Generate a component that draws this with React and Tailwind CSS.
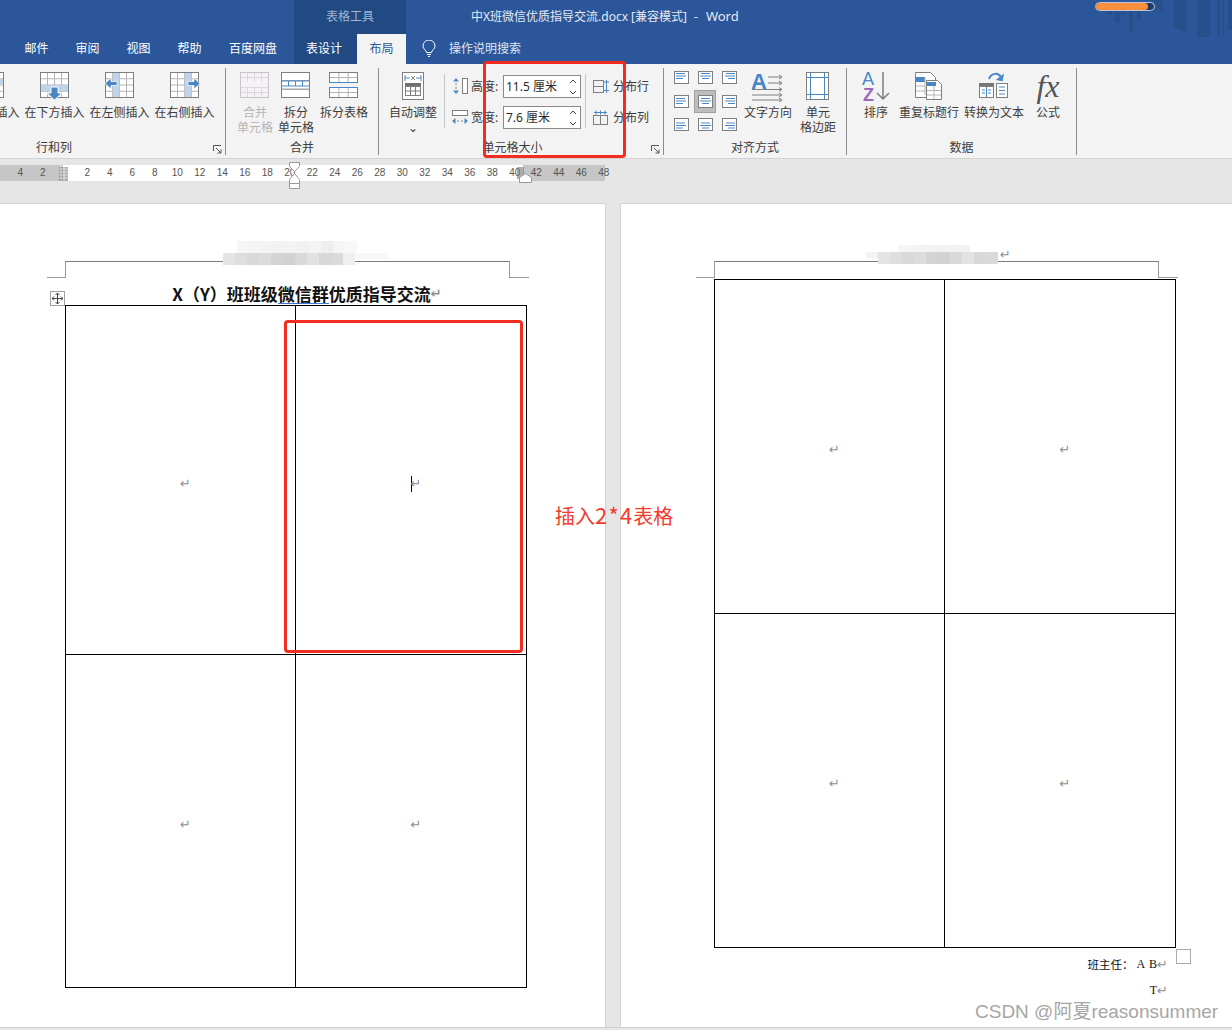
const BLUE = '#4a86c5';
const GRAY = '#7f7f7f';

function Grid({ x, y, w, h, cols, rows, stroke = GRAY, fill = '#fff', inner = '#b5b5b5' }) {
  const lines = [];
  for (let i = 1; i < cols; i++) {
    const px = x + (w * i) / cols;
    lines.push(<line key={'c' + i} x1={px} x2={px} y1={y} y2={y + h} stroke={inner} />);
  }
  for (let i = 1; i < rows; i++) {
    const py = y + (h * i) / rows;
    lines.push(<line key={'r' + i} x1={x} x2={x + w} y1={py} y2={py} stroke={inner} />);
  }
  return (
    <g>
      <rect x={x} y={y} width={w} height={h} fill={fill} />
      {lines}
      <rect x={x} y={y} width={w} height={h} fill="none" stroke={stroke} />
    </g>
  );
}

const InsertBelow = () => (
  <svg width="30" height="30" viewBox="0 0 30 30">
    <Grid x={0.5} y={1.5} w={28} h={25} cols={4} rows={4} />
    <rect x={1} y={14} width={27} height={6} fill="#c0d3e8" />
    <path d="M11 16h7v6h4l-7.500 7-7.500-7h4z" fill={BLUE} stroke="#fff" />
  </svg>
);
const InsertAbove = () => (
  <svg width="30" height="30" viewBox="0 0 30 30">
    <Grid x={0.5} y={1.5} w={28} h={25} cols={4} rows={4} />
    <rect x={1} y={8} width={27} height={6} fill="#c0d3e8" />
  </svg>
);
const InsertLeft = () => (
  <svg width="30" height="30" viewBox="0 0 30 30">
    <Grid x={0.5} y={1.5} w={28} h={25} cols={4} rows={4} />
    <rect x={7.500} y={2} width={7} height={24} fill="#c0d3e8" />
    <path d="M0 12.500l6-5.500v3.500h6v4H6V18z" fill={BLUE} stroke="#fff" strokeWidth="0.7" />
  </svg>
);
const InsertRight = () => (
  <svg width="30" height="30" viewBox="0 0 30 30">
    <Grid x={0.5} y={1.5} w={28} h={25} cols={4} rows={4} />
    <rect x={14.500} y={2} width={7} height={24} fill="#c0d3e8" />
    <path d="M30 12.500L24 7v3.500h-6v4h6V18z" fill={BLUE} stroke="#fff" strokeWidth="0.7" />
  </svg>
);
const MergeCells = () => (
  <svg width="30" height="30" viewBox="0 0 30 30">
    <Grid x={0.5} y={1.5} w={28} h={25} cols={4} rows={5} stroke="#c8c4c8" fill="#f7f1f7" inner="#dcd7dc" />
    <rect x={1} y={11} width={27} height={5} fill="#f7f1f7" />
  </svg>
);
const SplitCells = () => (
  <svg width="30" height="30" viewBox="0 0 30 30">
    <Grid x={0.5} y={1.5} w={28} h={25} cols={1} rows={3} inner={GRAY} />
    <rect x={0.5} y={10} width={28} height={5} fill="#fff" stroke={BLUE} />
    <path d="M7.500 10v5M14.500 10v5M21.500 10v5" stroke={BLUE} />
  </svg>
);
const SplitTable = () => (
  <svg width="30" height="30" viewBox="0 0 30 30">
    <Grid x={0.5} y={1.5} w={28} h={10} cols={3} rows={2} />
    <path d="M0.500 11.500h28" stroke={BLUE} />
    <Grid x={0.5} y={16.5} w={28} h={10} cols={3} rows={2} />
    <path d="M0.500 16.500h28" stroke={BLUE} />
  </svg>
);
const AutoFit = () => (
  <svg width="24" height="30" viewBox="0 0 24 30">
    <rect x={1.5} y={1.5} width={21} height={27} fill="#fff" stroke={GRAY} />
    <path d="M4 4v6M20 4v6M4 7h5M15 7h5" stroke={BLUE} />
    <path d="M10 5l4 4M14 5l-4 4" stroke={GRAY} />
    <rect x={4} y={12} width={16} height={3} fill="#6f6f6f" />
    <Grid x={4.5} y={15.5} w={15} h={9} cols={3} rows={2} inner={GRAY} />
  </svg>
);
const RowHeight = () => (
  <svg width="17" height="17" viewBox="0 0 17 17">
    <rect x={10.500} y={0.5} width={5} height={15} fill="#fff" stroke={GRAY} />
    <path d="M4 1v14" stroke={GRAY} strokeDasharray="2 2" />
    <path d="M4 0l3 3.500H1zM4 16l3-3.500H1z" fill={BLUE} />
  </svg>
);
const ColWidth = () => (
  <svg width="17" height="17" viewBox="0 0 17 17">
    <rect x={0.5} y={1.5} width={15} height={5} fill="#fff" stroke={GRAY} />
    <path d="M1 12h14" stroke={GRAY} strokeDasharray="2 2" />
    <path d="M0 12l3.500-3v6zM16 12l-3.500-3v6z" fill={BLUE} />
  </svg>
);
const DistRows = () => (
  <svg width="16" height="16" viewBox="0 0 16 16">
    <rect x={0.5} y={1.5} width={10} height={12} fill="none" stroke={GRAY} />
    <path d="M0.500 7.500h10" stroke={GRAY} />
    <path d="M13.500 1v13M11 3h5M11 11.500h5" stroke={BLUE} />
  </svg>
);
const DistCols = () => (
  <svg width="16" height="16" viewBox="0 0 16 16">
    <rect x={0.5} y={5.5} width={14} height={9} fill="none" stroke={GRAY} />
    <path d="M7.500 5.500v9" stroke={GRAY} />
    <path d="M1 2.500h13M3 0.500v4M12 0.500v4M7.500 0.500v4" stroke={BLUE} />
  </svg>
);
const TextDir = () => (
  <svg width="34" height="32" viewBox="0 0 34 32">
    <text x="0" y="19" fontSize="22" fontWeight="700" fill={BLUE} fontFamily="Liberation Sans, sans-serif">A</text>
    <path d="M17 7h13M17 13h13M1 19.500h29M1 25h29M1 30h29" stroke={GRAY} />
    <path d="M28 5l3 2-3 2M28 11l3 2-3 2M28 17.500l3 2-3 2M28 23l3 2-3 2M28 28l3 2-3 2" fill="none" stroke={GRAY} />
  </svg>
);
const Margins = () => (
  <svg width="24" height="30" viewBox="0 0 24 30">
    <rect x={0.5} y={1.5} width={22} height={27} fill="#fff" stroke={GRAY} />
    <path d="M4.500 1.500v27M18.500 1.500v27M0.500 6.500h22M0.500 23.500h22" stroke={BLUE} />
  </svg>
);
const Sort = () => (
  <svg width="28" height="32" viewBox="0 0 28 32">
    <text x="0" y="15" fontSize="18" fill={BLUE} fontFamily="Liberation Sans, sans-serif">A</text>
    <text x="1" y="31" fontSize="18" fontWeight="700" fill="#9b69b5" fontFamily="Liberation Sans, sans-serif">Z</text>
    <path d="M21 2v27M15 23l6 6 6-6" fill="none" stroke={GRAY} strokeWidth="1.500" />
  </svg>
);
const RepeatHeader = () => (
  <svg width="30" height="30" viewBox="0 0 30 30">
    <path d="M1.500 1.500h15l5 5v20h-20z" fill="#fff" stroke={GRAY} />
    <rect x={2} y={6} width={9} height={5} fill={BLUE} />
    <path d="M2 15h9M2 20h9M11 6v18" stroke="#b5b5b5" />
    <path d="M12.500 9.500h11l4 4v15h-15z" fill="#fff" stroke={GRAY} />
    <rect x={13} y={11} width={9} height={4} fill={BLUE} />
    <path d="M13 19.500h14M13 24h14M20 15v13" stroke="#b5b5b5" />
  </svg>
);
const ToText = () => (
  <svg width="30" height="30" viewBox="0 0 30 30">
    <path d="M10 8c2-6 9-7 12-2" fill="none" stroke={BLUE} strokeWidth="2" />
    <path d="M24 2v8h-7z" fill={BLUE} transform="rotate(10 22 8)" />
    <rect x={0} y={12} width={15} height={4} fill="#777" />
    <rect x={0.5} y={15.5} width={14} height={11} fill="#fff" stroke={GRAY} />
    <path d="M7.500 16v10M3 19h3M9 19h3M3 22h3M9 22h3" stroke={BLUE} />
    <rect x={17.500} y={12.500} width={11} height={14} fill="#fff" stroke={GRAY} />
    <path d="M20 16h6M20 19.500h6M20 23h6" stroke={BLUE} />
  </svg>
);
const Launcher = () => (
  <svg width="9" height="9" viewBox="0 0 9 9">
    <path d="M0.500 6V0.500H8M3 3l5 5M8 4.500V8H4.500" fill="none" stroke="#555" />
  </svg>
);
const Chevrons = () => (
  <svg width="8" height="18" viewBox="0 0 8 18">
    <path d="M1 5l3-3 3 3M1 13l3 3 3-3" fill="none" stroke="#444" />
  </svg>
);
const Bulb = () => (
  <svg width="14" height="18" viewBox="0 0 14 18">
    <path d="M4.500 12.500C4 10 1 9 1 6a6 6 0 0 1 12 0c0 3-3 4-3.500 6.500z" fill="none" stroke="#fff" />
    <path d="M5 14.500h4M6 16.500h2" stroke="#fff" />
  </svg>
);

function Tool({ w, icon, lines, faded }) {
  return (
    <div className={`flex shrink-0 flex-col items-center text-center ${faded ? 'text-[#b5b5b5]' : ''}`} style={{ width: w }}>
      <div className="flex h-[32px] items-center justify-center">{icon}</div>
      <div className="mt-[3px] whitespace-nowrap leading-[15px]">
        {lines.map((l) => (
          <div key={l}>{l}</div>
        ))}
      </div>
    </div>
  );
}

function Group({ w, label, labelClass = 'text-center', launcher, children }) {
  return (
    <div className="relative flex h-[87px] shrink-0 flex-col justify-between border-r border-[#8c8c8c]" style={{ width: w }}>
      <div className="flex items-start pt-[2px]">{children}</div>
      <div className={`leading-[15px] ${labelClass}`}>{label}</div>
      {launcher && (
        <div className="absolute bottom-[1px] right-[3px] flex">
          <Launcher />
        </div>
      )}
    </div>
  );
}

function SizeRow({ icon, label, value }) {
  return (
    <div className="flex h-[23px] items-center">
      <div className="flex w-[19px]">{icon}</div>
      <span className="w-[32px] leading-[15px]">{label}</span>
      <div className="flex h-[23px] w-[78px] items-center justify-between border border-[#8a8a8a] bg-white pl-[2px] pr-[3px]">
        <span className="whitespace-nowrap text-[#2a2a2a]">{value}</span>
        <Chevrons />
      </div>
    </div>
  );
}

const alignLines = {
  l: [[2, 10], [2, 11], [2, 8]],
  c: [[3, 11], [2, 12], [4, 10]],
  r: [[4, 12], [3, 12], [6, 12]],
};

function AlignCell({ h, v, active }) {
  const top = v === 0 ? 2.5 : v === 1 ? 3.5 : 5;
  return (
    <div className={`flex h-[23px] w-[22px] items-center justify-center justify-self-center ${active ? 'border border-[#a0a0a0] bg-[#bdbdbd]' : ''}`}>
      <svg width="15" height="13" viewBox="0 0 15 13">
        <rect x={0.5} y={0.5} width={14} height={12} fill="#fff" stroke={GRAY} />
        {alignLines[h].map(([a, b], i) => (
          <line key={i} x1={a} x2={b + 1} y1={top + i * 2.5} y2={top + i * 2.5} stroke={BLUE} />
        ))}
      </svg>
    </div>
  );
}

function Ribbon() {
  return (
    <div className="flex h-[95px] border-b border-[#d2d2d2] bg-[#f3f3f3] pt-[4px] text-[12px] text-[#3c3c3c]">
      <Group w={226} label="行和列" labelClass="w-[108px] text-center" launcher>
        <div className="ml-[-43px] flex">
          <Tool w={65} icon={<InsertAbove />} lines={['在上方插入']} />
          <Tool w={65} icon={<InsertBelow />} lines={['在下方插入']} />
          <Tool w={65} icon={<InsertLeft />} lines={['在左侧插入']} />
          <Tool w={65} icon={<InsertRight />} lines={['在右侧插入']} />
        </div>
      </Group>
      <Group w={153} label="合并">
        <div className="ml-[8px] flex">
          <Tool w={42} faded icon={<MergeCells />} lines={['合并', '单元格']} />
          <Tool w={40} icon={<SplitCells />} lines={['拆分', '单元格']} />
          <Tool w={56} icon={<SplitTable />} lines={['拆分表格']} />
        </div>
      </Group>
      <Group w={285} label="单元格大小" labelClass="pr-[17px] text-center" launcher>
        <div className="ml-[7px] flex">
          <Tool w={54} icon={<AutoFit />} lines={['自动调整', '⌄']} />
          <div className="ml-[4px] mt-[4px] h-[54px] w-px bg-[#c6c6c6]" />
          <div className="ml-[7px] mt-[5px] flex flex-col gap-[8px]">
            <SizeRow icon={<RowHeight />} label="高度:" value="11.5 厘米" />
            <SizeRow icon={<ColWidth />} label="宽度:" value="7.6 厘米" />
          </div>
          <div className="ml-[4px] mt-[4px] h-[54px] w-px bg-[#c6c6c6]" />
          <div className="ml-[7px] mt-[5px] flex flex-col gap-[8px]">
            <div className="flex h-[23px] items-center gap-[4px]">
              <DistRows />
              <span>分布行</span>
            </div>
            <div className="flex h-[23px] items-center gap-[4px]">
              <DistCols />
              <span>分布列</span>
            </div>
          </div>
        </div>
      </Group>
      <Group w={183} label="对齐方式">
        <div className="ml-[6px] flex">
          <div className="mt-[-4px] grid w-[71px] grid-cols-3 gap-y-[0.5px]">
            {[0, 1, 2].map((v) =>
              ['l', 'c', 'r'].map((h) => <AlignCell key={v + h} h={h} v={v} active={v === 1 && h === 'c'} />)
            )}
          </div>
          <Tool w={54} icon={<TextDir />} lines={['文字方向']} />
          <div className="w-[3px]" />
          <Tool w={40} icon={<Margins />} lines={['单元', '格边距']} />
        </div>
      </Group>
      <Group w={230} label="数据">
        <div className="ml-[9px] flex">
          <Tool w={40} icon={<Sort />} lines={['排序']} />
          <Tool w={66} icon={<RepeatHeader />} lines={['重复标题行']} />
          <Tool w={64} icon={<ToText />} lines={['转换为文本']} />
          <Tool
            w={44}
            icon={<span className="font-['Liberation_Serif',serif] text-[32px] italic leading-[32px] text-[#555]">fx</span>}
            lines={['公式']}
          />
        </div>
      </Group>
    </div>
  );
}

function TitleBar() {
  return (
    <div className="relative bg-[#2b579a] text-white">
      <div className="flex h-[34px]">
        <div className="w-[294px]" />
        <div className="flex w-[112px] items-center justify-center bg-[#224a82] text-[12px] text-[#9fb4d3]">表格工具</div>
        <div className="ml-[65px] flex items-center whitespace-pre text-[12px] text-[#e4eaf3]">
          <span>中X班微信优质指导交流.docx [兼容模式]</span>
          <span className="ml-[7px]">-</span>
          <span className="ml-[8px] text-[13px]">Word</span>
        </div>
      </div>
      <div className="flex h-[30px] items-center text-[12px]">
        <div className="w-[11px]" />
        {[['邮件', 51], ['审阅', 51], ['视图', 51], ['帮助', 51], ['百度网盘', 76]].map(([t, w]) => (
          <div key={t} className="flex h-full items-center justify-center" style={{ width: w }}>
            {t}
          </div>
        ))}
        <div className="ml-[3px] flex h-full w-[112px]">
          <div className="flex w-[63px] items-center justify-center bg-[#224a82] pr-[3px]">表设计</div>
          <div className="flex w-[49px] items-center justify-center bg-[#f3f3f3] text-[#2b579a]">布局</div>
        </div>
        <div className="ml-[16px] flex items-center gap-[13px] text-[#dfe6f1]">
          <Bulb />
          <span>操作说明搜索</span>
        </div>
      </div>
      <svg className="absolute right-0 top-0" width="137" height="40" viewBox="0 0 137 40">
        <g fill="#264f8c">
          <path d="M13 2h4v13h-4zM20 2h5v21h-5zM26 2h4v13h-4zM34 2h4v30h-4zM42 2h4v18h-4z" />
          <path d="M57 0h11v14zM79 0h13v33l-13-6zM102 0h13v37h-13zM122 0h3v36h-3zM127 0h2v34h-2zM133 0h4v30h-4z" />
        </g>
        <rect x="0.500" y="2.500" width="59" height="8" rx="4" fill="#1f3a66" stroke="#b9c7dc" />
        <rect x="1" y="3" width="52" height="7" rx="3.500" fill="#f98f3c" />
      </svg>
    </div>
  );
}

const rulerCell = 'w-[22.5px] shrink-0 text-center';

function Ruler() {
  const mid = [];
  for (let i = 2; i <= 40; i += 2) mid.push(i);
  return (
    <div className="relative h-[44px] bg-[#e6e6e6] pt-[6px]">
      <div className="flex h-[16px] font-['Liberation_Sans',sans-serif] text-[10px] leading-[16px] text-[#555]">
        <div className="flex w-[63px] shrink-0 bg-[#c6c6c6] pl-[9px]">
          <div className={rulerCell}>4</div>
          <div className={rulerCell}>2</div>
        </div>
        <div className="flex w-[460px] shrink-0 bg-white pl-[13px]">
          {mid.map((n) => (
            <div key={n} className={rulerCell}>
              {n}
            </div>
          ))}
        </div>
        <div className="flex w-[82px] shrink-0 bg-[#c6c6c6] pl-[2px]">
          {[42, 44, 46, 48].map((n) => (
            <div key={n} className={rulerCell}>
              {n}
            </div>
          ))}
        </div>
      </div>
      <svg className="absolute left-0 top-0" width="606" height="44" viewBox="0 0 606 44">
        <rect x="59" y="8" width="9" height="14" fill="#777" opacity="0.6" />
        <path d="M59 10h9M59 13h9M59 16h9M59 19h9M61 6v16M64 6v16" stroke="#fff" strokeWidth="0.6" />
        <rect x="517" y="8" width="7" height="12" fill="#777" opacity="0.6" />
        <path d="M289.500 3.500h10v4l-5 5-5-5zM289.500 20.500l5-6 5 6v4h-10zM289.500 24.500h10v5h-10z" fill="#fff" stroke="#999" />
        <path d="M519.500 23.500v-5l6-4 6 4v5z" fill="#fff" stroke="#999" />
      </svg>
    </div>
  );
}

function Mosaic({ cells, h, lead, trail }) {
  return (
    <div className="flex items-start">
      {lead && <div className="h-[6px] shrink-0" style={{ width: lead, background: '#f3f3f3' }} />}
      {cells.map((c, i) => (
        <div key={i} className="w-[12px] shrink-0" style={{ background: c, height: h }} />
      ))}
      {trail && <div className="h-[6px] shrink-0" style={{ width: trail, background: '#f8f8f8' }} />}
    </div>
  );
}

function HeaderFrame() {
  return (
    <div className="flex h-[17px] w-[482px]">
      <div className="w-[18px] border-b border-[#9a9a9a]" />
      <div className="w-[445px] border-x border-t border-x-[#9a9a9a] border-t-[#7a7a7a]" />
      <div className="flex-1 border-b border-[#9a9a9a]" />
    </div>
  );
}

function Mark({ className = '' }) {
  return <span className={`font-['DejaVu_Sans',sans-serif] text-[13px] leading-[12px] text-[#8f8f8f] ${className}`}>↵</span>;
}

function Cell({ className = '', children }) {
  return <div className={`flex items-center justify-center border-b border-r border-black pl-[10px] pt-[7px] ${className}`}>{children || <Mark />}</div>;
}

function Title() {
  return (
    <div className="flex h-[27px] w-[482px] items-center justify-center pl-[38px] pt-[4px] font-['Noto_Sans_CJK_SC',sans-serif] text-[17px] font-bold leading-[20px] text-[#111]">
      <span className="whitespace-nowrap">
        X（Y）班班级<span className="inline-block border-b border-[#3c78d8] leading-[18px]">微信群</span>优质指导交流
      </span>
      <Mark />
    </div>
  );
}

function App() {
  const light = ['#f6f6f6', '#f4f4f4', '#f3f3f3', '#f2f2f2', '#f3f3f3', '#f1f1f1', '#f4f4f4', '#eee', '#f5f5f5', '#f8f8f8'];
  const dark = ['#e4e4e4', '#dedede', '#d9d9d9', '#dcdcdc', '#d4d4d4', '#d2d2d2', '#d9d9d9', '#e2e2e2', '#d8d8d8', '#dadada', '#efefef'];
  return (
    <div className="relative h-[1030px] w-[1232px] overflow-hidden bg-[#e6e6e6] font-['Noto_Sans','Noto_Sans_CJK_SC',sans-serif]">
      <TitleBar />
      <Ribbon />
      <Ruler />

      <div className="flex h-[825px] gap-[14px] border-b border-[#d0d0d0]">
        <div className="relative w-[606px] border-r border-t border-[#d4d4d4] bg-white pl-[47px] pt-[57px]">
          <HeaderFrame />
          <Title />
          <div className="ml-[18px] grid h-[683px] w-[462px] grid-cols-[230px_231px] grid-rows-[349px_333px] border-l border-t border-black">
            <Cell />
            <Cell>
              <span className="mr-[-1px] h-[16px] w-px bg-black" />
              <Mark />
            </Cell>
            <Cell />
            <Cell />
          </div>
          <div className="absolute left-[50px] top-[87px] flex h-[15px] w-[15px] items-center justify-center border border-[#a0a0a0] bg-white">
            <svg width="11" height="11" viewBox="0 0 11 11">
              <path d="M5.500 0v11M0 5.500h11M3.500 2l2-2 2 2M3.500 9l2 2 2-2M2 3.500l-2 2 2 2M9 3.500l2 2-2 2" fill="none" stroke="#444" />
            </svg>
          </div>
          <div className="absolute left-[223px] top-[37px]">
            <div className="ml-[14px]">
              <Mosaic cells={light} h={12} />
            </div>
            <Mosaic cells={dark} h={12} trail={34} />
          </div>
        </div>

        <div className="relative flex-1 border-l border-t border-[#d4d4d4] bg-white pl-[75px] pt-[57px]">
          <HeaderFrame />
          <div className="ml-[18px] mt-[1px] grid h-[669px] w-[462px] grid-cols-[230px_231px] grid-rows-[334px_334px] border-l border-t border-black">
            <Cell />
            <Cell />
            <Cell />
            <Cell />
          </div>
          <div className="ml-[18px] mt-[9px] flex w-[454px] flex-col items-end font-['Liberation_Serif','Noto_Sans_CJK_SC',serif] text-[12px] leading-[15px] text-[#111]">
            <div className="flex items-center whitespace-pre">
              <span className="font-['Noto_Sans_CJK_SC',sans-serif] text-[11.5px]">班主任：</span>
              <span className="ml-[3px]">A</span>
              <span className="ml-[4px]">B</span>
              <Mark />
            </div>
            <div className="mt-[11px] flex items-center">
              <span>T</span>
              <Mark />
            </div>
          </div>
          <div className="absolute left-[555px] top-[745px] h-[15px] w-[15px] border border-[#aaa] bg-white" />
          <div className="absolute left-[245px] top-[41px] flex items-center">
            <div>
              <div className="ml-[32px]">
                <Mosaic cells={light.slice(0, 6)} h={7} />
              </div>
              <Mosaic cells={dark.slice(0, 10)} h={12} lead={12} />
            </div>
            <Mark className="ml-[2px]" />
          </div>
        </div>
      </div>

      {/* annotations on top of the screenshot */}
      <div className="absolute left-[284px] top-[320px] h-[333px] w-[239px] rounded-[4px] border-[3px] border-[#f32b20]" />
      <div className="absolute left-[483px] top-[61px] h-[97px] w-[143px] rounded-[4px] border-[3px] border-[#f32b20]" />
      <div className="absolute left-[555px] top-[499px] font-['Noto_Sans_CJK_SC',sans-serif] text-[20px] leading-[30px] text-[#f43a2c]">
        插入<span className="text-[22px] tracking-[1.2px]">2*4</span>表格
      </div>
      <div className="absolute left-[975px] top-[1000px] whitespace-nowrap font-['Liberation_Sans','Noto_Sans_CJK_SC',sans-serif] text-[19px] leading-[24px] text-[#a6a6a6]">CSDN @阿夏reasonsummer</div>
    </div>
  );
}

export default App;
